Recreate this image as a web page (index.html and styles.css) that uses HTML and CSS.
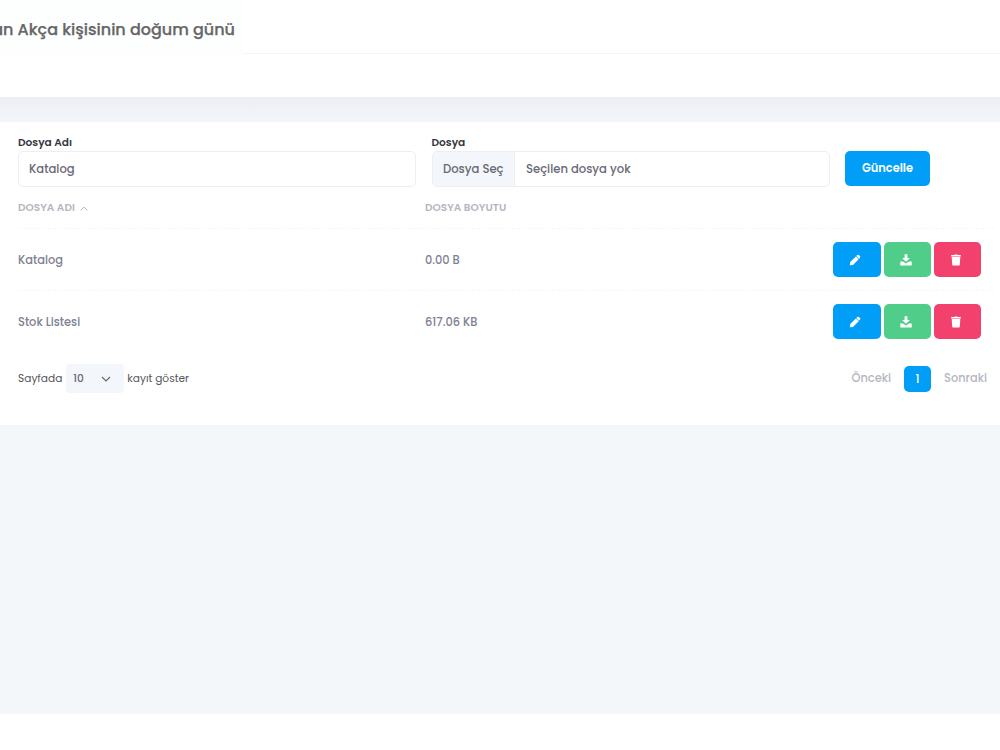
FILE: index.html
```html
<!DOCTYPE html>
<html lang="tr">
<head>
  <meta charset="UTF-8">
  <meta name="viewport" content="width=device-width, initial-scale=1.0">
  <title>Dosyalar</title>
  <link rel="stylesheet" href="styles.css">
</head>
<body>
  <header class="header">
    <div class="header-top">
      <div class="notice">an Akça kişisinin doğum günü</div>
      <div class="header-line"></div>
    </div>
  </header>

  <main class="content">
    <div class="card">
      <form class="upload-form">
        <div class="field">
          <label>Dosya Adı</label>
          <div class="control">Katalog</div>
        </div>
        <div class="field">
          <label>Dosya</label>
          <div class="control file">
            <div class="file-button">Dosya Seç</div>
            <span>Seçilen dosya yok</span>
          </div>
        </div>
        <button type="button" class="btn update">Güncelle</button>
      </form>

      <div class="table">
        <div class="row head">
          <div class="col-name">DOSYA ADI<svg class="sort" viewBox="0 0 8 5"><path d="M.7 4.3 4 1.2l3.3 3.1"/></svg></div>
          <div class="col-size">DOSYA BOYUTU</div>
        </div>
        <div class="row">
          <div class="col-name">Katalog</div>
          <div class="col-size">0.00 B</div>
          <div class="actions">
            <button class="btn edit"><svg viewBox="0 0 12 12"><path d="M.8 11.3l.4-3.2 5.7-5.7 2.8 2.8L4 10.9zM7.3 2l1-1q.8-.7 1.6 0l1.1 1.1q.7.8 0 1.6l-1 1z"/></svg></button>
            <button class="btn download"><svg viewBox="0 0 12 12"><path d="M4.6.3h2.8v3.6h2.5L6 7.7 2.1 3.9h2.5zM.3 7.5h2.6L6 9.4l3.1-1.9h2.6v4H.3z"/></svg></button>
            <button class="btn delete"><svg viewBox="0 0 12 12"><path d="M1.2 1h3L4.8.4h2.4l.6.6h3v1.5H1.2zM1.7 3h8.6l-.5 7.4q-.1 1.2-1.3 1.2h-5q-1.2 0-1.3-1.2z"/></svg></button>
          </div>
        </div>
        <div class="row">
          <div class="col-name">Stok Listesi</div>
          <div class="col-size">617.06 KB</div>
          <div class="actions">
            <button class="btn edit"><svg viewBox="0 0 12 12"><path d="M.8 11.3l.4-3.2 5.7-5.7 2.8 2.8L4 10.9zM7.3 2l1-1q.8-.7 1.6 0l1.1 1.1q.7.8 0 1.6l-1 1z"/></svg></button>
            <button class="btn download"><svg viewBox="0 0 12 12"><path d="M4.6.3h2.8v3.6h2.5L6 7.7 2.1 3.9h2.5zM.3 7.5h2.6L6 9.4l3.1-1.9h2.6v4H.3z"/></svg></button>
            <button class="btn delete"><svg viewBox="0 0 12 12"><path d="M1.2 1h3L4.8.4h2.4l.6.6h3v1.5H1.2zM1.7 3h8.6l-.5 7.4q-.1 1.2-1.3 1.2h-5q-1.2 0-1.3-1.2z"/></svg></button>
          </div>
        </div>
      </div>

      <div class="table-footer">
        <div class="length">
          <span>Sayfada</span>
          <div class="select"><span>10</span><svg viewBox="0 0 10 6"><path d="M1 1l4 4 4-4"/></svg></div>
          <span>kayıt göster</span>
        </div>
        <div class="pagination">
          <span>Önceki</span>
          <span class="page">1</span>
          <span>Sonraki</span>
        </div>
      </div>
    </div>
  </main>
  <footer class="footer"></footer>
</body>
</html>
```

FILE: styles.css
```css
* {
  box-sizing: border-box;
}

body {
  margin: 0;
  height: 750px;
  overflow: hidden;
  display: flex;
  flex-direction: column;
  background: #f3f7fa;
  font-family: Poppins, Inter, sans-serif;
  font-size: 11.4px;
  font-weight: 500;
  white-space: nowrap;
}

.header {
  height: 97px;
  background: #fff;
}

.header-top {
  display: flex;
  height: 54px;
}

.notice {
  width: 243px;
  padding: 5px 8px 0 0;
  display: flex;
  justify-content: flex-end;
  align-items: center;
  background: #fdfefe;
  color: #666;
  font-size: 16px;
  font-weight: 500;
  -webkit-text-stroke: 0.25px #666;
}

.header-line {
  flex: 1;
  border-bottom: 1px solid #f4f4f6;
}

.content {
  flex: 1;
  padding-top: 25px;
  background: linear-gradient(#eceef3, #f2f6f9 25px, #f3f7fa 26px);
}

.card {
  height: 303px;
  padding: 13px 0 0 18px;
  background: #fff;
}

.upload-form {
  display: flex;
  align-items: flex-end;
  gap: 15.5px;
}

.field {
  width: 398px;
}

label {
  display: block;
  height: 16px;
  line-height: 16px;
  color: #35373f;
  font-size: 10.6px;
  font-weight: 600;
}

.control {
  display: flex;
  align-items: center;
  height: 36px;
  padding-left: 10px;
  border: 1px solid #eceef1;
  border-radius: 5px;
  color: #686875;
  font-size: 11.6px;
}

.file {
  padding-left: 0;
  gap: 11px;
}

.file-button {
  display: flex;
  align-items: center;
  width: 82.5px;
  height: 34px;
  padding-left: 10.5px;
  border-right: 1px solid #eceef1;
  border-radius: 4px 0 0 4px;
  background: #f3f6fa;
}

.btn {
  display: flex;
  align-items: center;
  justify-content: center;
  height: 35px;
  padding: 0;
  border: 0;
  border-radius: 5px;
  color: #fff;
  font: inherit;
}

.update {
  width: 85px;
  margin-bottom: 1px;
  background: #009ef7;
  font-weight: 600;
}

.row {
  display: flex;
  align-items: center;
  height: 62px;
  margin-right: 6px;
  color: #7e8093;
}

.row + .row {
  border-top: 1px dashed #f5f7f9;
}

.head {
  height: 41px;
  color: #b5b6c1;
  font-size: 10.5px;
  font-weight: 600;
}

.col-name {
  display: flex;
  align-items: center;
  width: 407px;
  padding-top: 1px;
}

.col-size {
  flex: 1;
  padding-top: 1px;
}

.sort {
  width: 8px;
  height: 5px;
  margin-left: 5px;
}

.sort path,
.select path {
  fill: none;
  stroke: currentColor;
}

.select path {
  stroke-width: 1.2;
}

.actions {
  display: flex;
  gap: 3px;
  margin-right: 13px;
}

.actions svg {
  width: 12px;
  height: 12px;
  margin-right: 4px;
  fill: #fff;
}

.edit {
  width: 48px;
  background: #009ef7;
}

.download {
  width: 47px;
  background: #50cd89;
}

.delete {
  width: 47px;
  background: #f1416c;
}

.table-footer {
  display: flex;
  align-items: center;
  justify-content: space-between;
  height: 29px;
  margin-top: 12px;
  padding-right: 13px;
}

.length {
  display: flex;
  align-items: center;
  color: #55565c;
  font-size: 10.6px;
  font-weight: 400;
}

.select {
  display: flex;
  align-items: center;
  justify-content: space-between;
  width: 58px;
  height: 29px;
  margin: 0 3px 0 4px;
  padding: 0 13px 0 7px;
  border-radius: 4px;
  background: #f3f6fa;
  color: #686875;
  font-weight: 500;
}

.select svg {
  width: 10px;
  height: 6px;
}

.pagination {
  display: flex;
  align-items: center;
  gap: 13px;
  color: #b5b6c1;
}

.page {
  width: 27px;
  height: 26px;
  border-radius: 5px;
  background: #009ef7;
  color: #fff;
  line-height: 26px;
  text-align: center;
}

.footer {
  height: 36px;
  background: #fff;
}
```
